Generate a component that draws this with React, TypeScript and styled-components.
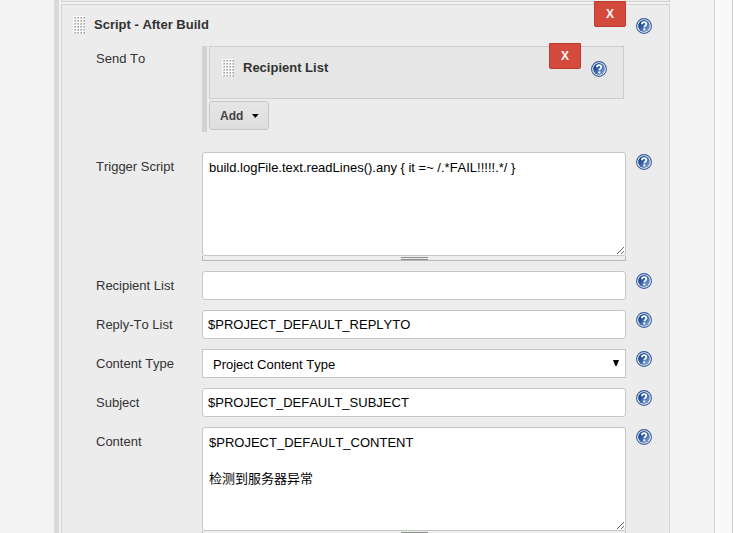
import React from "react";
import styled, { createGlobalStyle } from "styled-components";

const GlobalStyle = createGlobalStyle`
  *, *::before, *::after { box-sizing: border-box; }
  html { scrollbar-width: none; }
  body {
    margin: 0;
    background: #f3f3f3;
    color: #333;
    font: 13px/18px "Liberation Sans", Arial, "Noto Sans CJK SC", sans-serif;
    font-kerning: none;
  }
  button, input, select, textarea { font-family: inherit; font-kerning: none; margin: 0; }
`;

const Page = styled.div`
  display: flex;
  height: 100vh;
  overflow: hidden;
`;

const Main = styled.main`
  flex: 1;
  min-width: 0;
  padding: 0 44px 0 54px;
  background: #f3f3f3;
`;

const Gutter = styled.aside`
  flex: none;
  width: 19px;
  border: solid #ccc;
  border-width: 0 1px;
  border-left-color: #d4d4d4;
  background: #f9f9f9;
`;

const TriggerGroup = styled.div`
  min-height: 100%;
  padding-left: 2px;
  border-left: 5px solid #d9d9d9;
`;

const PreviousPanel = styled.div`
  height: 2px;
  margin-bottom: 2px;
  border: 1px solid #d2d2d2;
  border-top: 0;
  background: #ececec;
`;

const Panel = styled.section`
  position: relative;
  padding: 11px 17px 20px 11px;
  border: 1px solid #d2d2d2;
  background: #ececec;
`;

const PanelHeader = styled.header`
  display: flex;
  align-items: flex-start;
  height: 18px;
  margin-bottom: 12px;
`;

const NestedPanel = styled.section`
  position: relative;
  height: 53px;
  padding: 12px 16px 0 12px;
  border: 1px solid #ccc;
  background: #e6e6e6;
`;

const Title = styled.h3`
  flex: 1;
  margin: 0 0 0 9px;
  color: #333;
  font-size: 13px;
  line-height: 17px;
`;

const Handle = styled.span`
  width: 12px;
  height: 18px;
  background: #fcfcfc;
  cursor: move;
  svg { display: block; }
`;

const RemoveButton = styled.button<{ $right: number; $top: number }>`
  position: absolute;
  top: ${(p) => p.$top}px;
  right: ${(p) => p.$right}px;
  width: 32px;
  height: 26px;
  padding: 0;
  border: 1px solid #b93a2e;
  border-radius: 0 0 2px 2px;
  background: #d44a3c;
  color: #f8f8f8;
  font-size: 12px;
  font-weight: bold;
  line-height: 24px;
`;

const HelpButton = styled.button`
  display: block;
  justify-self: end;
  width: 16px;
  height: 16px;
  margin-top: 2px;
  padding: 0;
  border: 0;
  background: none;
  svg { display: block; }
`;

const Rows = styled.div`
  display: flex;
  flex-direction: column;
  gap: 10px;
  padding-left: 23px;
`;

const FormRow = styled.div`
  display: grid;
  grid-template-columns: 106px minmax(0, 1fr) 26px;
  align-items: start;
`;

const SendRow = styled(FormRow)`
  margin-bottom: 10px;
`;

const Label = styled.label`
  padding-top: 6px;
`;

const SendLabel = styled.span`
  padding-top: 4px;
`;

const Recipients = styled.div`
  height: 86px;
  padding: 0 2px;
  border-left: 5px solid #d2d2d2;
`;

const AddButton = styled.button`
  display: flex;
  align-items: center;
  gap: 9px;
  width: 60px;
  height: 29px;
  margin-top: 2px;
  padding: 0 9px 0 10px;
  border: 1px solid #c6c6c6;
  border-radius: 3px;
  background: linear-gradient(#e6e6e6, #dedede);
  color: #444;
  font-size: 12px;
  font-weight: bold;
`;

const TextInput = styled.input`
  display: block;
  width: 100%;
  height: 29px;
  padding: 0 5px;
  border: 1px solid #c6c6c6;
  border-radius: 3px;
  background: #fff;
  color: #000;
  font-size: 13px;
`;

const TextArea = styled.textarea`
  display: block;
  width: 100%;
  height: 104px;
  padding: 6px;
  border: 1px solid #c6c6c6;
  border-radius: 3px;
  background: #fff;
  color: #000;
  font-size: 13px;
  line-height: 18px;
  resize: both;
`;

const ResizeBar = styled.div`
  display: flex;
  justify-content: center;
  height: 5px;
  border: 1px solid #b8b8b4;
  border-top: 0;
  background: #eee;
  &::after {
    content: "";
    width: 27px;
    height: 3px;
    margin-top: 1px;
    border: solid #8a8e88;
    border-width: 1px 0;
  }
`;

const SelectBox = styled.div`
  position: relative;
  svg {
    position: absolute;
    top: 11px;
    right: 7px;
    pointer-events: none;
  }
`;

const Select = styled.select`
  display: block;
  appearance: none;
  width: 100%;
  height: 29px;
  padding: 2px 20px 0 10px;
  border: 1px solid #c6c6c6;
  border-radius: 0;
  background: #fff;
  color: #000;
  font-size: 13px;
`;

function Grip() {
  const dots: React.ReactElement[] = [];
  for (let y = 1; y < 18; y += 3) {
    for (let x = 1; x < 12; x += 3) {
      dots.push(<rect key={`d${x}-${y}`} x={x} y={y} width="2" height="2" fill="#cdcdcd" />);
      dots.push(<rect key={`c${x}-${y}`} x={x + 1} y={y} width="1" height="1" fill="#a0a0a0" />);
    }
  }
  return (
    <Handle aria-hidden="true">
      <svg width="12" height="18" shapeRendering="crispEdges">{dots}</svg>
    </Handle>
  );
}

function Help({ topic }: { topic: string }) {
  return (
    <HelpButton type="button" aria-label={`Help for feature: ${topic}`}>
      <svg width="16" height="16" viewBox="0 0 16 16">
        <defs>
          <linearGradient id="helpFill" x1="0" y1="0" x2="1" y2="1">
            <stop offset="0.3" stopColor="#1f4c94" />
            <stop offset="1" stopColor="#8fb0da" />
          </linearGradient>
        </defs>
        <circle cx="8" cy="8" r="7.4" fill="#fff" stroke="#32599a" strokeWidth="1.1" />
        <circle cx="8" cy="8" r="5.9" fill="url(#helpFill)" />
        <path d="M5.9 6.3C5.9 4.9 6.8 4.1 8.1 4.1s2.2.8 2.2 1.9c0 1.6-2 1.6-2 3.3" fill="none" stroke="#fff" strokeWidth="1.8" />
        <rect x="7.3" y="10.4" width="2" height="1.9" fill="#fff" />
      </svg>
    </HelpButton>
  );
}

function TextRow({ id, label, value }: { id: string; label: string; value: string }) {
  return (
    <FormRow>
      <Label htmlFor={id}>{label}</Label>
      <TextInput id={id} type="text" defaultValue={value} />
      <Help topic={label} />
    </FormRow>
  );
}

function AreaRow({ id, label, value }: { id: string; label: string; value: string }) {
  return (
    <FormRow>
      <Label htmlFor={id}>{label}</Label>
      <div>
        <TextArea id={id} defaultValue={value} spellCheck={false} />
        <ResizeBar />
      </div>
      <Help topic={label} />
    </FormRow>
  );
}

export default function App() {
  return (
    <Page>
      <GlobalStyle />
      <Main>
        <TriggerGroup>
          <PreviousPanel />
          <Panel>
            <PanelHeader>
              <Grip />
              <Title>Script - After Build</Title>
              <Help topic="Script - After Build" />
            </PanelHeader>
            <RemoveButton type="button" aria-label="Remove trigger" $top={-4} $right={43}>X</RemoveButton>
            <Rows>
              <SendRow>
                <SendLabel>Send To</SendLabel>
                <Recipients>
                  <NestedPanel>
                    <PanelHeader>
                      <Grip />
                      <Title>Recipient List</Title>
                      <Help topic="Recipient List" />
                    </PanelHeader>
                    <RemoveButton type="button" aria-label="Remove recipient" $top={-4} $right={42}>X</RemoveButton>
                  </NestedPanel>
                  <AddButton type="button">
                    Add
                    <svg width="7" height="4" viewBox="0 0 7 4"><path d="M0 0h7L3.5 4z" fill="#000" /></svg>
                  </AddButton>
                </Recipients>
              </SendRow>
              <AreaRow id="script" label="Trigger Script" value="build.logFile.text.readLines().any { it =~ /.*FAIL!!!!!.*/ }" />
              <TextRow id="recipients" label="Recipient List" value="" />
              <TextRow id="replyTo" label="Reply-To List" value="$PROJECT_DEFAULT_REPLYTO" />
              <FormRow>
                <Label htmlFor="contentType">Content Type</Label>
                <SelectBox>
                  <Select id="contentType" defaultValue="default">
                    <option value="default">Project Content Type</option>
                  </Select>
                  <svg width="6" height="6" viewBox="0 0 6 6"><path d="M0 0h6L3.6 6H2.4z" fill="#000" /></svg>
                </SelectBox>
                <Help topic="Content Type" />
              </FormRow>
              <TextRow id="subject" label="Subject" value="$PROJECT_DEFAULT_SUBJECT" />
              <AreaRow id="content" label="Content" value={"$PROJECT_DEFAULT_CONTENT\n\n检测到服务器异常"} />
            </Rows>
          </Panel>
        </TriggerGroup>
      </Main>
      <Gutter />
    </Page>
  );
}
